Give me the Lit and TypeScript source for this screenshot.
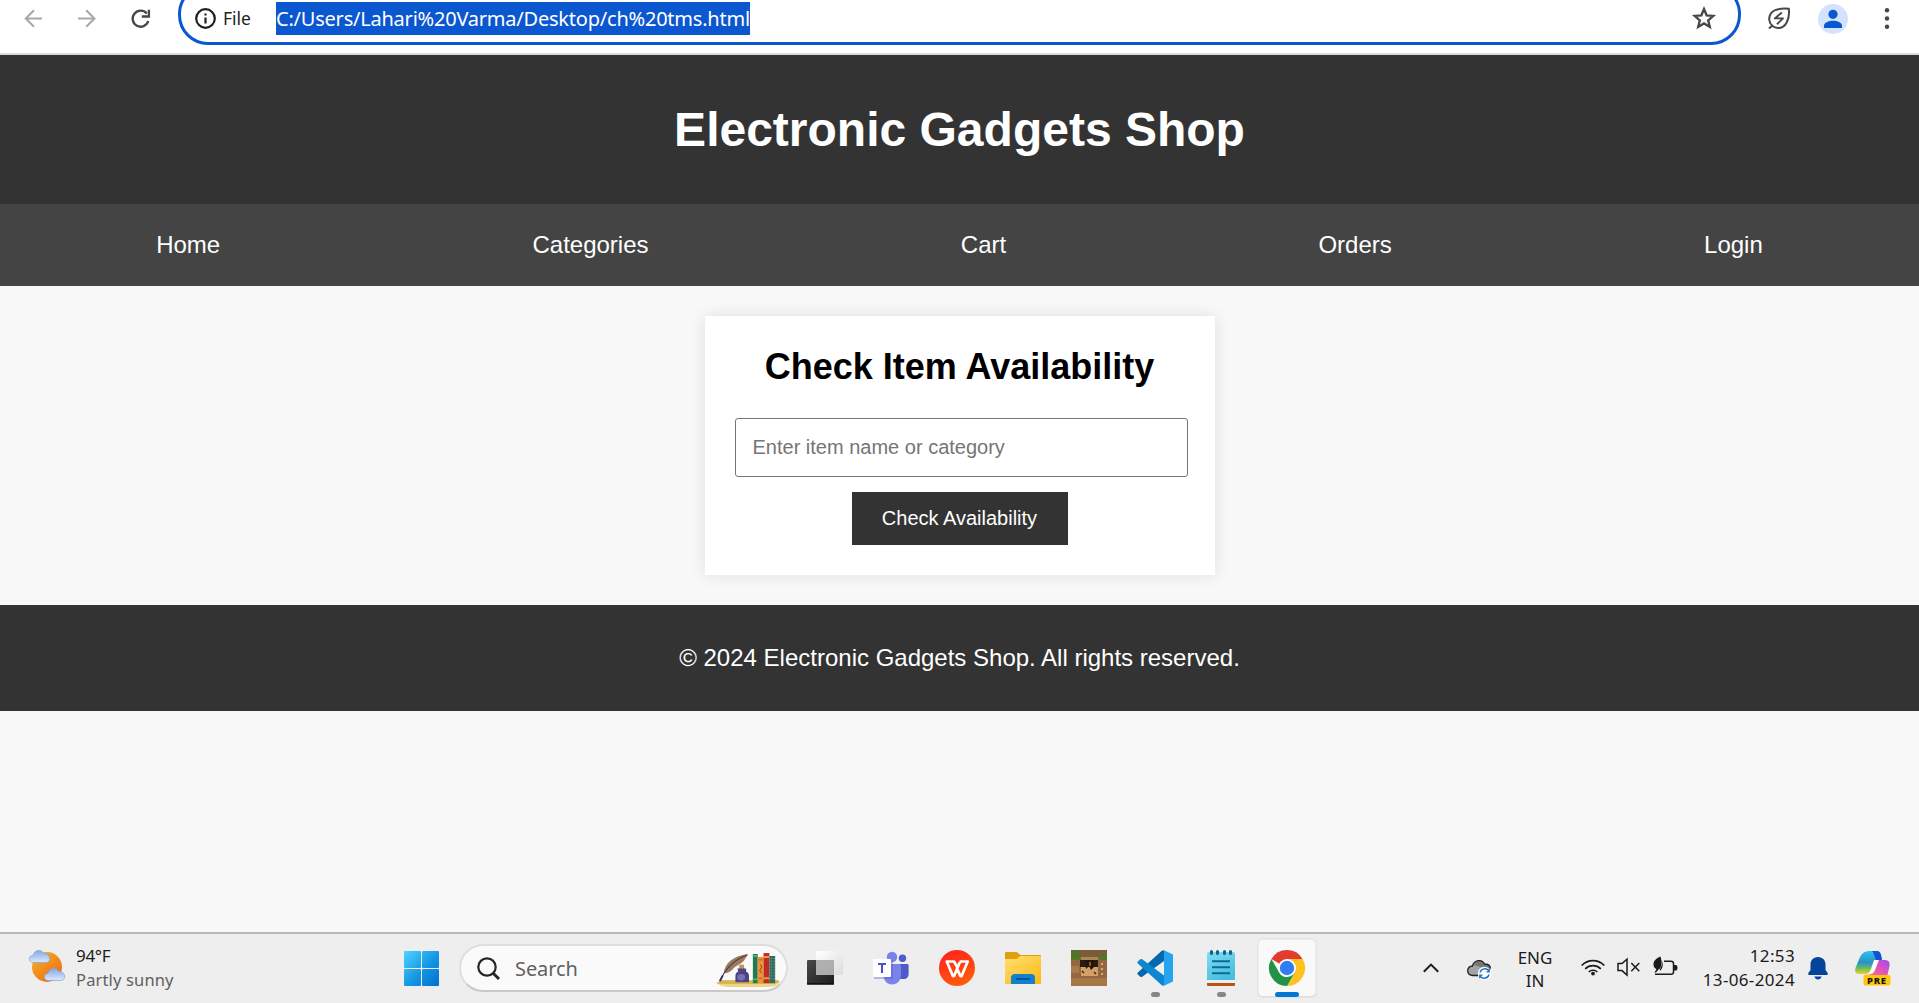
import { LitElement, html, css, svg } from "lit";
import { customElement } from "lit/decorators.js";

@customElement("browser-toolbar")
class BrowserToolbar extends LitElement {
  static styles = css`
    :host { display: flex; height: 53px; overflow: hidden; background: #fff; border-bottom: 2px solid #dcdcdc; font-family: "Noto Sans", "Open Sans", sans-serif; align-items: flex-start; }
    svg { display: block; flex: none; }
    .nav { width: 36px; height: 37px; margin-right: 17px; }
    .first { margin-left: 16px; }
    .omnibox { display: flex; align-items: flex-start; box-sizing: border-box; width: 1563px; height: 61px; margin-top: -16px; margin-left: 3px; border: 3px solid #0b57d0; border-radius: 30px; padding: 13px 0 0 12px; }
    .info { width: 25px; height: 37px; }
    .file { margin-left: 5px; width: 53px; line-height: 37px; font-size: 17.5px; letter-spacing: 0; color: #1f1f1f; }
    .url { margin-top: 2px; height: 33px; line-height: 33px; width: 474px; background: #0b57d0; color: #fff; font-size: 20px; white-space: nowrap; letter-spacing: -0.22px; }
    .star { width: 26px; height: 37px; margin-left: auto; margin-right: 21px; }
    .leaf { width: 26px; height: 37px; margin-left: 25px; }
    .avatar { width: 30px; height: 37px; margin-left: 26px; }
    .dots { width: 10px; height: 37px; margin-left: 34px; }
  `;
  render() {
    return html`
      <svg class="nav first" viewBox="0 0 36 37" fill="none" stroke="#a9a9a9" stroke-width="2.1"><path d="M26 18.5H10.5M18 10.2L9.8 18.5L18 26.8" /></svg>
      <svg class="nav" viewBox="0 0 36 37" fill="none" stroke="#a9a9a9" stroke-width="2.1"><path d="M9 18.5H24.7M17.2 10.2L25.4 18.5L17.2 26.8" /></svg>
      <svg class="nav" viewBox="0 0 36 37" fill="none" stroke="#474747" stroke-width="2.3"><path d="M24.8 13.6A8 8 0 1 0 26.3 21" /><path d="M26.9 9.8V16.5H19.8" /></svg>
      <div class="omnibox">
        <svg class="info" viewBox="0 0 25 37" fill="none" stroke="#1f1f1f" stroke-width="2.2"><circle cx="12.5" cy="18.5" r="9.3" /><path d="M12.5 17.5V23.5M12.5 13.4V15.6" /></svg>
        <span class="file">File</span>
        <span class="url">C:/Users/Lahari%20Varma/Desktop/ch%20tms.html</span>
        <svg class="star" viewBox="0 0 26 37" fill="none" stroke="#474747" stroke-width="2.3"><path d="M13 9L15.6 15.3L22.3 15.9L17.2 20.3L18.8 26.9L13 23.4L7.2 26.9L8.8 20.3L3.7 15.9L10.4 15.3Z" /></svg>
      </div>
      <svg class="leaf" viewBox="0 0 26 37" fill="none" stroke="#474747" stroke-width="2"><path d="M22.8 8.8C13 8 3 9.5 3.2 19.5C3.6 25 8 28 12 28C20 28 24 19 22.800 8.800ZM7 25L3 28.5" /><path d="M15.8 12.6L8.800 18.400H17L11 24.2" stroke-width="1.9" stroke-linejoin="round" /></svg>
      <svg class="avatar" viewBox="0 0 30 37"><circle cx="15" cy="19" r="15" fill="#d3e3fd" /><circle cx="15" cy="14.3" r="4.6" fill="#0b57d0" /><path d="M6 28V25.5C6 22.5 11 20.8 15 20.8S24 22.5 24 25.5V28Z" fill="#0b57d0" /></svg>
      <svg class="dots" viewBox="0 0 10 37" fill="#474747"><circle cx="5" cy="10.2" r="2.2" /><circle cx="5" cy="18.5" r="2.2" /><circle cx="5" cy="26.8" r="2.2" /></svg>
    `;
  }
}

@customElement("shop-page")
class ShopPage extends LitElement {
  static styles = css`
    :host { display: block; height: 877px; background: #f8f8f8; font-family: "Liberation Sans", Arial, sans-serif; font-size: 24px; color: #000; overflow: hidden; }
    header { height: 149px; background: #333; color: #fff; display: flex; justify-content: center; align-items: center; }
    h1 { margin: 0; font-size: 48px; line-height: 54px; }
    nav { height: 82px; background: #444; display: flex; justify-content: space-around; align-items: center; }
    nav a { color: #fff; text-decoration: none; }
    .card { box-sizing: border-box; width: 510px; height: 259px; margin: 30px auto; padding: 30px; background: #fff; box-shadow: 0 0 15px rgba(0, 0, 0, 0.1); display: flex; flex-direction: column; align-items: center; }
    h2 { margin: 0 0 31px; font-size: 36px; line-height: 41px; white-space: nowrap; }
    input { box-sizing: border-box; align-self: flex-start; flex: none; width: 453px; height: 59px; margin: 0 0 15px; padding: 0 17px; border: 1px solid #767676; border-radius: 3px; font: 20px "Liberation Sans", Arial, sans-serif; background: #fff; outline: none; }
    input::placeholder { color: #757575; }
    button { flex: none; width: 216px; height: 53px; padding: 0; border: 0; background: #333; color: #fff; font: 20px "Liberation Sans", Arial, sans-serif; }
    footer { height: 106px; background: #333; color: #fff; display: flex; justify-content: center; align-items: center; }
  `;
  render() {
    return html`
      <header><h1>Electronic Gadgets Shop</h1></header>
      <nav>${["Home", "Categories", "Cart", "Orders", "Login"].map((t) => html`<a>${t}</a>`)}</nav>
      <section class="card">
        <h2>Check Item Availability</h2>
        <input type="text" placeholder="Enter item name or category" />
        <button>Check Availability</button>
      </section>
      <footer><span>© 2024 Electronic Gadgets Shop. All rights reserved.</span></footer>
    `;
  }
}

const cloudPath = "M4 13.5C-1 13 -1 6.5 4 6.5C5 1 12 -0.5 15 4.5C21 4 23 12.5 17.5 13.5Z";

const winTile = (x: number, y: number) => svg`<rect x=${x} y=${y} width="17" height="17" rx="1" />`;

const apps = [
  { run: false, active: false, icon: svg`
    <rect x="0" y="10" width="27" height="24.5" rx="1" fill="url(#tvDark)" />
    <rect x="0" y="33" width="27" height="1.6" fill="#111" />
    <rect x="9" y="1" width="27" height="24" rx="1" fill="url(#tvLight)" />
    <path d="M9 10H27V25H9Z" fill="#999" opacity=".75" />
    <defs><linearGradient id="tvDark" x2="1" y2="1"><stop stop-color="#4a4a4a" /><stop offset="1" stop-color="#1c1c1c" /></linearGradient>
    <linearGradient id="tvLight" x2="1" y2="1"><stop stop-color="#fff" /><stop offset="1" stop-color="#dcdcdc" /></linearGradient></defs>` },
  { run: false, active: false, icon: svg`
    <circle cx="29.5" cy="8.3" r="3.7" fill="#5059c9" />
    <path d="M22 14H34C35 14 35.6 14.6 35.6 15.6V24C35.6 27 33.5 29 31 29H24Z" fill="#5059c9" />
    <circle cx="19" cy="7" r="5.2" fill="#7b83eb" />
    <path d="M11 14H26C27.2 14 28 14.8 28 16V25C28 30.5 24 34.5 19 34.5S10.5 30.5 10.5 25Z" fill="#7b83eb" />
    <rect x="1" y="10.5" width="19" height="18.5" fill="#4b53bc" opacity=".35" />
    <rect x="0" y="9" width="18" height="18" rx="1" fill="#fff" />
    <path d="M5 14H13M9 14V23" stroke="#4b53bc" stroke-width="2.1" fill="none" />` },
  { run: false, active: false, icon: svg`
    <circle cx="18" cy="18" r="18" fill="url(#wpsRed)" />
    <path d="M18.2 17.2L15 11.500H7.800L14 26.200H15L20.800 12.2M17.800 18L21.500 26.200H22.500L28.700 11.500H20.500" stroke="#fff" stroke-width="2.7" fill="none" stroke-linejoin="round" />
    <defs><linearGradient id="wpsRed" x2=".5" y2="1"><stop stop-color="#ff1c20" /><stop offset="1" stop-color="#ff5a0a" /></linearGradient></defs>` },
  { run: false, active: false, icon: svg`
    <path d="M0 3Q0 2 1 2H11Q12 2 13 3L15.5 5H35Q36 5 36 6V12H0Z" fill="#dfa00b" />
    <path d="M0 9H10.5Q12 9 13 8L15 6H35Q36 6 36 7V34H0Z" fill="url(#folder)" />
    <path d="M6 34V28Q6 24 10 24H26Q30 24 30 28V34Z" fill="#1180cf" /><path d="M11 29H25" stroke="#07549e" stroke-width="2" />
    <defs><linearGradient id="folder" x2=".8" y2="1"><stop stop-color="#ffdf73" /><stop offset="1" stop-color="#fbbc18" /></linearGradient></defs>` },
  { run: false, active: false, icon: svg`
    <rect width="36" height="36" fill="#93673f" /><rect width="36" height="8" fill="#7d5b38" /><path d="M0 0H9V9H0ZM31 3H36V10H29Z" fill="#58702c" />
    <path d="M0 9H11M27 8H36" stroke="#4e7d25" stroke-width="2" />
    <rect x="10" y="7" width="17" height="3" fill="#a88657" />
    <rect x="9" y="10" width="18" height="7" fill="#2c1a12" /><rect x="10" y="17" width="17" height="9" fill="#d3a066" />
    <path d="M14 10H23V17L20 20L18 16L15 19Z" fill="#24140e" />
    <path d="M19 12V16" stroke="#e8a33e" stroke-width="1" /><path d="M11 21L13 23M23 22L25 24" stroke="#3a2115" stroke-width="1.4" />
    <path d="M31 13V15M31 18V20M31 23V25" stroke="#d2ac7b" stroke-width="2" /><rect y="28" width="36" height="8" fill="#a57745" /><rect y="16" width="8" height="7" fill="#a8794a" />` },
  { run: true, active: false, icon: svg`
    <path d="M0.8 22.5L24.5 1Q25.7 0 27 .4V11L5.2 26.8Q4 27.5 3 26.6L.8 24.6Q-.2 23.6 .8 22.5Z" fill="#0568ad" />
    <path d="M.8 13.5Q-.2 12.4 .8 11.4L3 9.4Q4 8.5 5.2 9.2L27 25.5V35.6Q25.7 36 24.5 35Z" fill="#0d86d0" />
    <path d="M27 0.2L36 4.5V31.5L27 35.8Z" fill="#27a4ef" />` },
  { run: true, active: false, icon: svg`
    <rect x="4" y="31" width="28" height="5" rx="1" fill="#b8540e" /><rect x="4" y="29" width="28" height="4" fill="#eee" />
    <path d="M4 4Q4 2 6 2H30Q32 2 32 4V30H4Z" fill="url(#note)" />
    <path d="M9 11.2H27M9 17.2H27M9 23.2H27" stroke="#086d94" stroke-width="2" />
    <path d="M8.5 1.5V3.5M14.5 1.5V3.5M21.5 1.5V3.5M27.5 1.5V3.5" stroke="#07668c" stroke-width="3" stroke-linecap="round" />
    <defs><linearGradient id="note" x2=".5" y2="1"><stop stop-color="#85dcf3" /><stop offset="1" stop-color="#48bfe0" /></linearGradient></defs>` },
  { run: true, active: true, icon: svg`
    <path d="M18 18L2.41 9A18 18 0 0 1 33.6 9Z" fill="#e33b2e" />
    <path d="M18 9H33.6A18 18 0 0 1 18 36L25.8 22.5Z" fill="#fdc220" />
    <path d="M2.41 9L10.2 22.5Q13 27 18 27L25.8 22.5L18 36A18 18 0 0 1 2.41 9Z" fill="#229345" />
    <path d="M18 9L33.6 9L25 22L18 27Z" fill="#fdc220" />
    <circle cx="18" cy="18" r="9" fill="#fff" /><circle cx="18" cy="18" r="7.2" fill="#2f7df0" />` },
];

@customElement("task-bar")
class TaskBar extends LitElement {
  static styles = css`
    :host { display: flex; height: 69px; border-top: 2px solid #b9b9b9; background: #eee; font-family: "Noto Sans", "Open Sans", sans-serif; font-size: 16.5px; line-height: 24px; color: #1b1b1b; }
    svg { display: block; flex: none; overflow: visible; }
    .weather { display: flex; width: 404px; }
    .sun { width: 36px; height: 36px; margin: 15px 11px 0 29px; }
    .wtext { padding-top: 10px; white-space: nowrap; }
    .muted { color: #606060; letter-spacing: 0.15px; }
    .temp { font-size: 17px; letter-spacing: -0.3px; }
    .start { width: 35px; height: 35px; margin-top: 17px; }
    .search { box-sizing: border-box; display: flex; width: 329px; height: 48px; margin: 10px 4px 0 20px; border: 2px solid #dedede; border-bottom-color: #c9c9c9; border-radius: 24px; background: #fafafa; }
    .glass { width: 24px; height: 24px; margin: 11px 0 0 16px; }
    .label { margin-left: 14px; font-size: 20px; line-height: 45px; color: #606060; letter-spacing: -0.1px; }
    .books { width: 65px; height: 36px; margin: 7px 5px 0 auto; }
    .app { box-sizing: border-box; width: 60px; height: 60px; margin: 4px 3px 0; padding-top: 12px; display: flex; flex-direction: column; align-items: center; border-radius: 6px; }
    .app.active { background: #f9f9f9; box-shadow: inset 0 0 0 1.5px #e4e4e4, inset 0 -2px 0 #dadada; }
    .icon { width: 36px; height: 36px; }
    .mark { width: 9px; height: 5px; margin-top: 6px; border-radius: 3px; background: #868686; }
    .active .mark { width: 24px; background: #0078d4; }
    .tray { display: flex; margin-left: auto; }
    .chev { width: 16px; height: 10px; margin: 29px 28px 0 0; }
    .cloud { width: 24px; height: 21px; margin: 25px 22px 0 0; }
    .lang { width: 44px; margin-right: 24px; padding-top: 12px; text-align: center; line-height: 23px; font-size: 17px; }
    .wifi { width: 24px; height: 18px; margin: 24px 12px 0 0; }
    .vol { width: 24px; height: 18px; margin: 24px 12px 0 0; }
    .batt { width: 25px; height: 20px; margin: 22px 19px 0 0; }
    .clock { width: 98px; padding-top: 10px; text-align: right; white-space: nowrap; font-size: 17px; letter-spacing: 0.35px; }
    .bell { width: 20px; height: 24px; margin: 22px 27px 0 13px; }
    .pilot { width: 36px; height: 36px; margin: 17px 28px 0 0; }
    .pre { font: 800 9.5px "Noto Sans", sans-serif; letter-spacing: 0.7px; }
  `;
  render() {
    return html`
      <div class="weather">
        <svg class="sun" viewBox="0 0 36 36">
          <defs><linearGradient id="sunG" x2=".8" y2="1"><stop stop-color="#f5b52d" /><stop offset="1" stop-color="#ee6a12" /></linearGradient>
          <linearGradient id="clG" x2="0" y2="1"><stop stop-color="#86a8e6" /><stop offset="1" stop-color="#dbe9fc" /></linearGradient></defs>
          <circle cx="18" cy="18" r="15" fill="url(#sunG)" />
          <path d=${cloudPath} fill="url(#clG)" stroke="#7fa0e0" stroke-width=".7" />
          <g transform="translate(15 18)"><path d=${cloudPath} fill="url(#clG)" stroke="#7fa0e0" stroke-width=".7" /></g>
        </svg>
        <div class="wtext"><div class="temp">94°F</div><div class="muted">Partly sunny</div></div>
      </div>
      <svg class="start" viewBox="0 0 35 35">
        <defs><linearGradient id="win" gradientUnits="userSpaceOnUse" x1="0" y1="0" x2="35" y2="35"><stop stop-color="#4ed4ff" /><stop offset=".55" stop-color="#1595e3" /><stop offset="1" stop-color="#0070cc" /></linearGradient></defs>
        <g fill="url(#win)">${winTile(0, 0)}${winTile(18, 0)}${winTile(0, 18)}${winTile(18, 18)}</g>
      </svg>
      <div class="search">
        <svg class="glass" viewBox="0 0 24 24" fill="none" stroke="#262626"><circle cx="10" cy="10" r="8.7" stroke-width="2.2" /><path d="M16.2 16.2L22 22" stroke-width="3" /></svg>
        <span class="label">Search</span>
        <svg class="books" viewBox="0 0 67 37">
          <path d="M5 28H64L65 30Q64 34 55 35H12Q5 34 0 31Z" fill="#f0d486" /><path d="M5 28H64L66 30L60 32H5L1 31Z" fill="#d9b44c" />
          <path d="M8 21C9 10 18 3 33 1C32 4 30 5 30 6C28 11 20 13 17 17C15 19 12 21 8 21Z" fill="#9b7a5e" />
          <path d="M4 29L8 21C14 12 21 6 32 2" fill="none" stroke="#4b3a48" stroke-width="1.1" /><path d="M4 29L7 23" stroke="#3c2d63" stroke-width="2" />
          <rect x="24" y="12" width="5" height="6" fill="#c8934a" /><path d="M22 16H31V19Q34 20 34 24V30H20V24Q20 20 23 19Z" fill="#4b4384" /><ellipse cx="26" cy="25" rx="4" ry="3.4" fill="#776fb6" />
          <rect x="38" y="1" width="5" height="30" fill="#237850" /><path d="M38 3H43M38 27H43" stroke="#4dac73" stroke-width="2" />
          <rect x="43" y="4" width="6" height="27" fill="#ed9339" /><path d="M44 7H48M44 26H48" stroke="#b75a1c" /><path d="M46 12L47 15L45 18L47 21" stroke="#8a4319" fill="none" />
          <rect x="49" y="0" width="6" height="31" fill="#bd2b22" /><path d="M49 4H55M49 26H55" stroke="#f09a45" stroke-width="2" />
          <rect x="55" y="3" width="6" height="28" fill="#2f6e68" /><path d="M57 5V29M60 5V29" stroke="#a6a968" stroke-width="1" stroke-dasharray="1 2" />
        </svg>
      </div>
      ${apps.map((a) => html`<div class="app ${a.active ? "active" : ""}"><svg class="icon" viewBox="0 0 36 36">${a.icon}</svg>${a.run ? html`<div class="mark"></div>` : ""}</div>`)}
      <div class="tray">
        <svg class="chev" viewBox="0 0 16 10" fill="none" stroke="#1b1b1b" stroke-width="2"><path d="M.8 8.8L8 1.6L15.2 8.8" /></svg>
        <svg class="cloud" viewBox="0 0 24 21">
          <path d="M6 16.5C-1 16.5 -1 7 5.5 7C7 1 15 -.5 17.5 5C22 5 23.5 8 23.5 10.5Q22 16.5 18 16.5Z" fill="#a3a3a3" />
          <path d="M7 6C9 1 15.5 .5 17.5 5C21 5 23 8 23 10L17 9Z" fill="#777" />
          <path d="M6 16.5C-1 16.5 -1 7 5.5 7C7 1 15 -.5 17.5 5C22 5 23.3 7.5 23.5 9.5M6 16.5H12" fill="none" stroke="#222" stroke-width="1.3" />
          <circle cx="17.5" cy="14.5" r="6.7" fill="#fff" />
          <path d="M13 13.5A4.8 4.8 0 0 1 22 12.5M22 15.5A4.8 4.8 0 0 1 13 16.5M22.2 9.8V12.8H19.5M12.8 19.2V16.2H15.5" fill="none" stroke="#1b6fc4" stroke-width="1.3" />
        </svg>
        <div class="lang">ENG<br />IN</div>
        <svg class="wifi" viewBox="0 0 24 18" fill="none" stroke="#1b1b1b" stroke-width="1.7"><path d="M.7 7.5A15.5 15.5 0 0 1 23.3 7.5M4.2 10.8A11 11 0 0 1 19.8 10.8M7.7 14A6.2 6.2 0 0 1 16.3 14" /><circle cx="12" cy="15.6" r="1.9" fill="#1b1b1b" stroke="none" /></svg>
        <svg class="vol" viewBox="0 0 24 18" fill="none" stroke="#1b1b1b" stroke-width="1.5"><path d="M1 5.5H5L10 1.2V17L5 12.6H1ZM14.3 5L22.3 13.2M22.3 5L14.3 13.2" /></svg>
        <svg class="batt" viewBox="0 0 25 20"><path d="M11 5.2H18Q20.5 5.2 20.5 7.5V16Q20.5 18.3 18 18.3H2" fill="none" stroke="#1b1b1b" stroke-width="1.5" /><path d="M21 9H23Q24.5 9 24.5 11.8T23 14.5H21Z" fill="#1b1b1b" /><path d="M7.500 .5C3 2.500 .2 5 .5 9C.8 11.500 2 12.500 3.500 13L1.500 16.500H3L5.500 13.500C9 12.500 9 5 7.500 .5ZM8.500 4C10.500 8 10 12 7.500 14.500L6.500 14C9 11 9.200 7 8.500 4Z" fill="#1b1b1b" /></svg>
        <div class="clock">12:53<br />13-06-2024</div>
        <svg class="bell" viewBox="0 0 20 24" fill="#04449a"><path d="M10 1C5 1 2.5 4.8 2.5 8.5V14L.3 17Q-.2 19 1 19H19Q20.2 19 19.7 17L17.5 14V8.5C17.5 4.8 15 1 10 1ZM6.2 20.5H13.8Q12.5 23.6 10 23.6T6.2 20.5Z" /></svg>
        <svg class="pilot" viewBox="0 0 36 36">
          <defs>
            <linearGradient id="pA" x2="0" y2="1"><stop stop-color="#2cc4ec" /><stop offset=".5" stop-color="#2a91c8" /><stop offset=".75" stop-color="#6cbd5a" /><stop offset="1" stop-color="#eed02e" /></linearGradient>
            <linearGradient id="pB" x1="1" x2="0" y2="1"><stop stop-color="#9b4df0" /><stop offset=".5" stop-color="#e654b8" /><stop offset="1" stop-color="#fb8b5d" /></linearGradient>
          </defs>
          <path d="M5 6Q8 0 14 0H22Q25 0 26 4L27 9H23Q20 9 19 12L16 20Q15 23 11 23H4Q-1 23 .5 17Z" fill="url(#pA)" />
          <path d="M17 0H22Q25 0 26 4L27 9H21L19 4Q18.500 1 17 0Z" fill="#1551cf" />
          <path d="M20 9H30Q35.500 9 34.500 15L32 26H9Q8 24 13 23.500Q16 23 17 19Z" fill="url(#pB)" />
          <path d="M19 9H24L20 19Q18.500 23.500 12 23.500Q15 22 16 18Z" fill="#fff" />
          <rect x="8.500" y="24" width="27" height="10.500" rx="2" fill="#fdc70a" />
          <text class="pre" x="12" y="32.700" fill="#111">PRE</text>
        </svg>
      </div>
    `;
  }
}

@customElement("app-root")
class AppRoot extends LitElement {
  static styles = css`
    :host { display: block; width: 1919px; height: 1003px; overflow: hidden; }
  `;
  render() {
    return html`<browser-toolbar></browser-toolbar><shop-page></shop-page><task-bar></task-bar>`;
  }
}
